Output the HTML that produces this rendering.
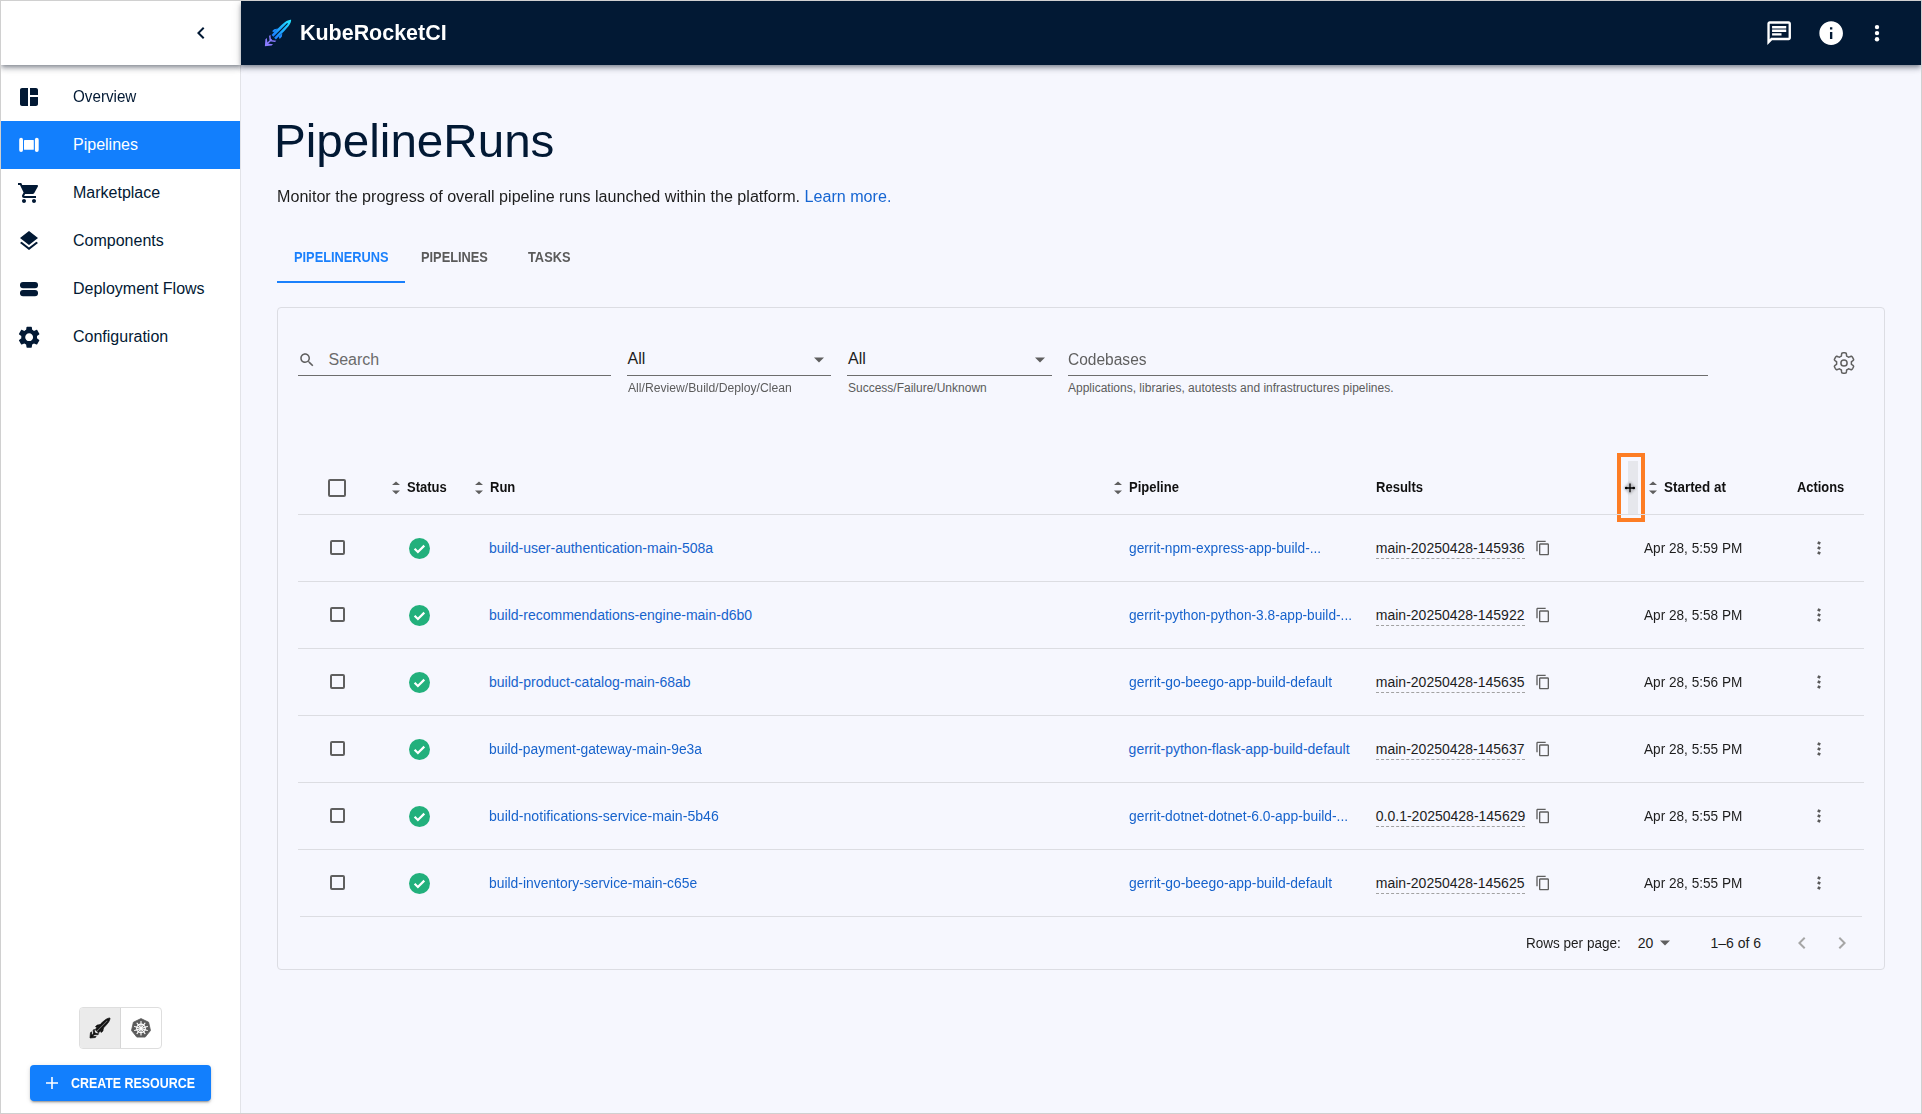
<!DOCTYPE html>
<html><head><meta charset="utf-8"><style>
*{box-sizing:border-box;margin:0;padding:0}
html,body{width:1922px;height:1114px;overflow:hidden}
body{font-family:"Liberation Sans",sans-serif;background:#f6f7fe;position:relative}
.t{position:absolute;white-space:nowrap}
.a{position:absolute}
svg{display:block}
</style></head><body>
<div class="a" style="left:1px;top:1px;width:240px;height:1112px;background:#fff;border-right:1px solid #e2e3e8"></div>
<div class="a" style="left:1px;top:121px;width:239px;height:48px;background:#127ffd"></div>
<div class="t" style="left:73px;top:89px;font-size:16px;line-height:16px;color:#021934;font-weight:400;transform:scaleX(0.95);transform-origin:0 0;">Overview</div>
<div class="t" style="left:73px;top:137px;font-size:16px;line-height:16px;color:#fff;font-weight:400;">Pipelines</div>
<div class="t" style="left:73px;top:185px;font-size:16px;line-height:16px;color:#021934;font-weight:400;">Marketplace</div>
<div class="t" style="left:73px;top:233px;font-size:16px;line-height:16px;color:#021934;font-weight:400;">Components</div>
<div class="t" style="left:73px;top:281px;font-size:16px;line-height:16px;color:#021934;font-weight:400;">Deployment Flows</div>
<div class="t" style="left:73px;top:329px;font-size:16px;line-height:16px;color:#021934;font-weight:400;">Configuration</div>
<svg class="a" style="left:17px;top:85px" width="24" height="24" viewBox="0 0 24 24"><g fill="#021934" ><path d="M11 21H5c-1.1 0-2-.9-2-2V5c0-1.1.9-2 2-2h6v18zm2 0h6c1.1 0 2-.9 2-2v-7h-8v9zm8-11V5c0-1.1-.9-2-2-2h-6v7h8z"/></g></svg>
<svg class="a" style="left:17px;top:133px" width="24" height="24" viewBox="0 0 24 24"><g fill="#fff" ><rect x="2.2" y="4.8" width="3.8" height="14.2" rx="1.9"/><rect x="7" y="7" width="9.8" height="9.8" rx=".6"/><rect x="17.9" y="4.8" width="3.8" height="14.2" rx="1.9"/></g></svg>
<svg class="a" style="left:17px;top:181px" width="24" height="24" viewBox="0 0 24 24"><g fill="#021934" ><path d="M7 18c-1.1 0-1.99.9-1.99 2S5.9 22 7 22s2-.9 2-2-.9-2-2-2zM1 2v2h2l3.6 7.59-1.35 2.45c-.16.28-.25.61-.25.96 0 1.1.9 2 2 2h12v-2H7.42c-.14 0-.25-.11-.25-.25l.03-.12.9-1.63h7.45c.75 0 1.41-.41 1.75-1.03l3.58-6.49c.08-.14.12-.31.12-.48 0-.55-.45-1-1-1H5.21l-.94-2H1zm16 16c-1.1 0-1.99.9-1.99 2s.89 2 1.99 2 2-.9 2-2-.9-2-2-2z"/></g></svg>
<svg class="a" style="left:17px;top:229px" width="24" height="24" viewBox="0 0 24 24"><g fill="#021934" ><path d="M11.99 18.54l-7.37-5.73L3 14.07l9 7 9-7-1.63-1.27-7.38 5.74zM12 16l7.36-5.73L21 9l-9-7-9 7 1.63 1.27L12 16z"/></g></svg>
<svg class="a" style="left:17px;top:277px" width="24" height="24" viewBox="0 0 24 24"><g fill="#021934" ><rect x="3" y="5" width="18" height="6.2" rx="3"/><rect x="3" y="13" width="18" height="6.2" rx="3"/></g></svg>
<svg class="a" style="left:15.85px;top:323.85px" width="26.3" height="26.3" viewBox="0 0 24 24"><g fill="#021934" ><path d="M19.14 12.94c.04-.3.06-.61.06-.94 0-.32-.02-.64-.07-.94l2.03-1.58c.18-.14.23-.41.12-.61l-1.92-3.32c-.12-.22-.37-.29-.59-.22l-2.39.96c-.5-.38-1.03-.7-1.62-.94l-.36-2.54c-.04-.24-.24-.41-.48-.41h-3.84c-.24 0-.43.17-.47.41l-.36 2.54c-.59.24-1.13.57-1.62.94l-2.39-.96c-.22-.08-.47 0-.59.22L2.74 8.87c-.12.21-.08.47.12.61l2.03 1.58c-.05.3-.09.63-.09.94s.02.64.07.94l-2.03 1.58c-.18.14-.23.41-.12.61l1.92 3.32c.12.22.37.29.59.22l2.39-.96c.5.38 1.03.7 1.62.94l.36 2.54c.05.24.24.41.48.41h3.84c.24 0 .44-.17.47-.41l.36-2.54c.59-.24 1.13-.56 1.62-.94l2.39.96c.22.08.47 0 .59-.22l1.92-3.32c.12-.22.07-.47-.12-.61l-2.01-1.58zM12 15.6c-1.98 0-3.6-1.62-3.6-3.6s1.62-3.6 3.6-3.6 3.6 1.62 3.6 3.6-1.62 3.6-3.6 3.6z"/></g></svg>
<div class="a" style="left:79px;top:1007px;width:83px;height:42px;border:1px solid #dedede;border-radius:4px;background:#fff;overflow:hidden"><div class="a" style="left:0;top:0;width:41px;height:40px;background:#ebebeb;border-right:1px solid #d6d6d6"></div></div>
<svg class="a" style="left:88px;top:1016px" width="24" height="24" viewBox="-15.8 -15.8 31.6 31.6"><g transform="rotate(45)" fill="#111" stroke="#111" stroke-width=".9" stroke-linejoin="round"><path d="M0 -18.6 C3 -15.5 3.4 -11 3.1 6 L0.55 6 L0.55 -13.5 L-0.55 -13.5 L-0.55 6 L-3.1 6 C-3.4 -11 -3 -15.5 0 -18.6Z"/><path d="M-3.2 -3 L-5.4 0 L-5.4 3 L-3.2 2.2Z M3.2 -3 L5.4 0 L5.4 3 L3.2 2.2Z"/><path d="M-4.2 6.6 L0 9.8 L4.2 6.6 L4.2 8.4 L0 11.8 L-4.2 8.4Z M-4.4 11.4 L0 14.8 L4.4 11.4 L4.4 13.4 L0 18.6 L-4.4 13.4Z M-0.7 9 h1.4 v7 h-1.4z"/></g></svg>
<svg class="a" style="left:130.5px;top:1017.5px" width="20" height="20" viewBox="0 0 20 20"><path d="M10 .6 L17.6 4.2 L19.5 12.5 L14.2 19.1 L5.8 19.1 L.5 12.5 L2.4 4.2Z" fill="#5b5b5b" stroke="#5b5b5b" stroke-width=".8" stroke-linejoin="round"/><circle cx="10" cy="10.4" r="4.3" fill="none" stroke="#fff" stroke-width="1.2"/><circle cx="10" cy="10.4" r="1.2" fill="#fff"/><g stroke="#fff" stroke-width="1.1" stroke-linecap="round"><line x1="10" y1="3.6" x2="10" y2="17"/><line x1="3.6" y1="8.4" x2="16.4" y2="12.4"/><line x1="16.4" y1="8.4" x2="3.6" y2="12.4"/><line x1="6" y1="15.6" x2="14" y2="5.2"/><line x1="14" y1="15.6" x2="6" y2="5.2"/></g></svg>
<div class="a" style="left:30px;top:1065px;width:181px;height:36px;background:#127ffd;border-radius:4px;box-shadow:0 3px 1px -2px rgba(0,0,0,.2),0 2px 2px 0 rgba(0,0,0,.14),0 1px 5px 0 rgba(0,0,0,.12)"></div>
<svg class="a" style="left:45px;top:1076px" width="14" height="14" viewBox="0 0 14 14"><path d="M6.2 1h1.6v12H6.2zM1 6.2h12v1.6H1z" fill="#fff"/></svg>
<div class="t" style="left:70.6px;top:1076px;font-size:14px;line-height:14px;color:#fff;font-weight:700;transform:scaleX(0.887);transform-origin:0 0;">CREATE RESOURCE</div>
<div class="a" style="left:1px;top:1px;width:240px;height:64px;background:#fff;box-shadow:0 2px 4px -1px rgba(10,20,40,.35),0 4px 5px 0 rgba(10,20,40,.2),0 1px 10px 0 rgba(0,0,0,.12);z-index:3"></div>
<div class="a" style="left:241px;top:1px;width:1680px;height:64px;background:#021934;box-shadow:0 2px 4px -1px rgba(10,20,40,.35),0 4px 5px 0 rgba(10,20,40,.2),0 1px 10px 0 rgba(0,0,0,.12);z-index:3"></div>
<svg class="a" style="left:188.7px;top:21px;z-index:4" width="24" height="24" viewBox="0 0 24 24"><path d="M15.41 7.41L14 6l-6 6 6 6 1.41-1.41L10.83 12z" fill="#021934"/></svg>
<svg class="a" style="left:262px;top:17px;z-index:4" width="32" height="32" viewBox="-16 -16 32 32">
<defs><linearGradient id="rg2" x1="0" y1="0" x2="0" y2="1"><stop offset="0" stop-color="#22e8ff"/><stop offset="1" stop-color="#1a7cff"/></linearGradient></defs>
<g transform="rotate(45)"><g fill="url(#rg2)"><path d="M0 -18.6 C3 -15.5 3.4 -11 3.1 6 L0.55 6 L0.55 -13.5 L-0.55 -13.5 L-0.55 6 L-3.1 6 C-3.4 -11 -3 -15.5 0 -18.6Z"/></g><g fill="#1f8cff"><path d="M-3.2 -3 L-5.4 0 L-5.4 3 L-3.2 2.2Z M3.2 -3 L5.4 0 L5.4 3 L3.2 2.2Z"/></g><g fill="#8a7cff"><path d="M-4.2 6.6 L0 9.8 L4.2 6.6 L4.2 8.4 L0 11.8 L-4.2 8.4Z M-4.4 11.4 L0 14.8 L4.4 11.4 L4.4 13.4 L0 18.6 L-4.4 13.4Z M-0.7 9 h1.4 v7 h-1.4z"/></g></g></svg>
<div class="t" style="left:299.5px;top:22px;font-size:22px;line-height:22px;color:#fff;font-weight:700;transform:scaleX(0.975);transform-origin:0 0;z-index:4;">KubeRocketCI</div>
<svg class="a" style="left:1764.6px;top:18.7px;z-index:4" width="28.3" height="28.3" viewBox="0 0 24 24"><path fill="#fff" d="M4 4h16v12H5.17L4 17.17V4m0-2c-1.1 0-1.99.9-1.99 2L2 22l4-4h14c1.1 0 2-.9 2-2V4c0-1.1-.9-2-2-2H4zm2 10h8v2H6v-2zm0-3h12v2H6V9zm0-3h12v2H6V6z"/></svg>
<svg class="a" style="left:1816.6px;top:18.7px;z-index:4" width="28.3" height="28.3" viewBox="0 0 24 24"><path fill="#fff" d="M12 2C6.48 2 2 6.48 2 12s4.48 10 10 10 10-4.48 10-10S17.52 2 12 2zm1 15h-2v-6h2v6zm0-8h-2V7h2v2z"/></svg>
<svg class="a" style="left:1867px;top:17px;z-index:4" width="20" height="32" viewBox="0 0 20 32"><g fill="#fff"><circle cx="10" cy="10.1" r="2.2"/><circle cx="10" cy="16.1" r="2.2"/><circle cx="10" cy="22.2" r="2.2"/></g></svg>
<div class="t" style="left:273.7px;top:117px;font-size:47px;line-height:47px;color:#021934;font-weight:400;transform:scaleX(1.0125);transform-origin:0 0;">PipelineRuns</div>
<div class="t" style="left:276.5px;top:189px;font-size:16px;line-height:16px;color:#1d1d1d;font-weight:400;transform:scaleX(1.007);transform-origin:0 0;">Monitor the progress of overall pipeline runs launched within the platform. <span style="color:#1565d2">Learn more.</span></div>
<div class="t" style="left:293.6px;top:250px;font-size:14px;line-height:14px;color:#1a80fc;font-weight:700;transform:scaleX(0.915);transform-origin:0 0;">PIPELINERUNS</div>
<div class="t" style="left:420.7px;top:250px;font-size:14px;line-height:14px;color:#5a5a5a;font-weight:700;transform:scaleX(0.915);transform-origin:0 0;">PIPELINES</div>
<div class="t" style="left:527.9px;top:250px;font-size:14px;line-height:14px;color:#5a5a5a;font-weight:700;transform:scaleX(0.915);transform-origin:0 0;">TASKS</div>
<div class="a" style="left:277px;top:281px;width:128px;height:2px;background:#1a80fc"></div>
<div class="a" style="left:277px;top:307px;width:1608px;height:663px;border:1px solid #dcdde3;border-radius:4px"></div>
<svg class="a" style="left:298px;top:351px" width="18" height="18" viewBox="0 0 24 24"><g fill="#5f5f5f" ><path d="M15.5 14h-.79l-.28-.27C15.41 12.59 16 11.11 16 9.5 16 5.91 13.09 3 9.5 3S3 5.91 3 9.5 5.91 16 9.5 16c1.61 0 3.09-.59 4.23-1.57l.27.28v.79l5 4.99L20.49 19l-4.99-5zm-6 0C7.01 14 5 11.99 5 9.5S7.01 5 9.5 5 14 7.01 14 9.5 11.99 14 9.5 14z"/></g></svg>
<div class="t" style="left:328.5px;top:352px;font-size:16px;line-height:16px;color:#6b6b6b;font-weight:400;">Search</div>
<div class="a" style="left:298px;top:375px;width:313px;height:1px;background:#6d6d6d"></div>
<div class="t" style="left:627.5px;top:351px;font-size:16px;line-height:16px;color:#1d1d1d;font-weight:400;">All</div>
<div class="a" style="left:627px;top:375px;width:204px;height:1px;background:#6d6d6d"></div>
<svg class="a" style="left:813px;top:357px" width="12" height="6" viewBox="0 0 12 6"><path d="M1 .5h10L6 5.5z" fill="#5f5f5f"/></svg>
<div class="t" style="left:627.5px;top:382px;font-size:12px;line-height:12px;color:#5c5c5c;font-weight:400;transform:scaleX(1.015);transform-origin:0 0;">All/Review/Build/Deploy/Clean</div>
<div class="t" style="left:848px;top:351px;font-size:16px;line-height:16px;color:#1d1d1d;font-weight:400;">All</div>
<div class="a" style="left:847px;top:375px;width:205px;height:1px;background:#6d6d6d"></div>
<svg class="a" style="left:1034px;top:357px" width="12" height="6" viewBox="0 0 12 6"><path d="M1 .5h10L6 5.5z" fill="#5f5f5f"/></svg>
<div class="t" style="left:848px;top:382px;font-size:12px;line-height:12px;color:#5c5c5c;font-weight:400;">Success/Failure/Unknown</div>
<div class="t" style="left:1067.5px;top:352px;font-size:16px;line-height:16px;color:#5f5f5f;font-weight:400;transform:scaleX(0.97);transform-origin:0 0;">Codebases</div>
<div class="a" style="left:1068px;top:375px;width:640px;height:1px;background:#6d6d6d"></div>
<div class="t" style="left:1068px;top:382px;font-size:12px;line-height:12px;color:#5c5c5c;font-weight:400;">Applications, libraries, autotests and infrastructures pipelines.</div>
<svg class="a" style="left:1832px;top:351px" width="24" height="24" viewBox="0 0 24 24"><path d="M19.40 12.00 L19.40 11.81 L19.39 11.61 L19.38 11.42 L19.36 11.23 L19.34 11.03 L19.37 10.83 L19.61 10.59 L20.00 10.30 L20.47 9.97 L20.93 9.61 L21.33 9.24 L21.58 8.89 L21.61 8.60 L21.52 8.34 L21.42 8.10 L21.32 7.85 L21.21 7.61 L21.09 7.37 L20.96 7.13 L20.83 6.90 L20.70 6.67 L20.55 6.44 L20.41 6.22 L20.25 6.00 L20.09 5.79 L19.93 5.58 L19.76 5.38 L19.48 5.26 L19.06 5.30 L18.54 5.46 L17.99 5.68 L17.47 5.92 L17.03 6.11 L16.69 6.20 L16.50 6.13 L16.35 6.01 L16.19 5.90 L16.03 5.79 L15.87 5.69 L15.70 5.59 L15.53 5.50 L15.36 5.41 L15.19 5.32 L15.01 5.24 L14.83 5.16 L14.67 5.04 L14.58 4.70 L14.53 4.22 L14.47 3.65 L14.39 3.07 L14.27 2.54 L14.09 2.15 L13.86 1.97 L13.60 1.93 L13.33 1.89 L13.07 1.86 L12.80 1.83 L12.53 1.81 L12.27 1.80 L12.00 1.80 L11.73 1.80 L11.47 1.81 L11.20 1.83 L10.93 1.86 L10.67 1.89 L10.40 1.93 L10.14 1.97 L9.91 2.15 L9.73 2.54 L9.61 3.07 L9.53 3.65 L9.47 4.22 L9.42 4.70 L9.33 5.04 L9.17 5.16 L8.99 5.24 L8.81 5.32 L8.64 5.41 L8.47 5.50 L8.30 5.59 L8.13 5.69 L7.97 5.79 L7.81 5.90 L7.65 6.01 L7.50 6.13 L7.31 6.20 L6.97 6.11 L6.53 5.92 L6.01 5.68 L5.46 5.46 L4.94 5.30 L4.52 5.26 L4.24 5.38 L4.07 5.58 L3.91 5.79 L3.75 6.00 L3.59 6.22 L3.45 6.44 L3.30 6.67 L3.17 6.90 L3.04 7.13 L2.91 7.37 L2.79 7.61 L2.68 7.85 L2.58 8.10 L2.48 8.34 L2.39 8.60 L2.42 8.89 L2.67 9.24 L3.07 9.61 L3.53 9.97 L4.00 10.30 L4.39 10.59 L4.63 10.83 L4.66 11.03 L4.64 11.23 L4.62 11.42 L4.61 11.61 L4.60 11.81 L4.60 12.00 L4.60 12.19 L4.61 12.39 L4.62 12.58 L4.64 12.77 L4.66 12.97 L4.63 13.17 L4.39 13.41 L4.00 13.70 L3.53 14.03 L3.07 14.39 L2.67 14.76 L2.42 15.11 L2.39 15.40 L2.48 15.66 L2.58 15.90 L2.68 16.15 L2.79 16.39 L2.91 16.63 L3.04 16.87 L3.17 17.10 L3.30 17.33 L3.45 17.56 L3.59 17.78 L3.75 18.00 L3.91 18.21 L4.07 18.42 L4.24 18.62 L4.52 18.74 L4.94 18.70 L5.46 18.54 L6.01 18.32 L6.53 18.08 L6.97 17.89 L7.31 17.80 L7.50 17.87 L7.65 17.99 L7.81 18.10 L7.97 18.21 L8.13 18.31 L8.30 18.41 L8.47 18.50 L8.64 18.59 L8.81 18.68 L8.99 18.76 L9.17 18.84 L9.33 18.96 L9.42 19.30 L9.47 19.78 L9.53 20.35 L9.61 20.93 L9.73 21.46 L9.91 21.85 L10.14 22.03 L10.40 22.07 L10.67 22.11 L10.93 22.14 L11.20 22.17 L11.47 22.19 L11.73 22.20 L12.00 22.20 L12.27 22.20 L12.53 22.19 L12.80 22.17 L13.07 22.14 L13.33 22.11 L13.60 22.07 L13.86 22.03 L14.09 21.85 L14.27 21.46 L14.39 20.93 L14.47 20.35 L14.53 19.78 L14.58 19.30 L14.67 18.96 L14.83 18.84 L15.01 18.76 L15.19 18.68 L15.36 18.59 L15.53 18.50 L15.70 18.41 L15.87 18.31 L16.03 18.21 L16.19 18.10 L16.35 17.99 L16.50 17.87 L16.69 17.80 L17.03 17.89 L17.47 18.08 L17.99 18.32 L18.54 18.54 L19.06 18.70 L19.48 18.74 L19.76 18.62 L19.93 18.42 L20.09 18.21 L20.25 18.00 L20.41 17.78 L20.55 17.56 L20.70 17.33 L20.83 17.10 L20.96 16.87 L21.09 16.63 L21.21 16.39 L21.32 16.15 L21.42 15.90 L21.52 15.66 L21.61 15.40 L21.58 15.11 L21.33 14.76 L20.93 14.39 L20.47 14.03 L20.00 13.70 L19.61 13.41 L19.37 13.17 L19.34 12.97 L19.36 12.77 L19.38 12.58 L19.39 12.39 L19.40 12.19Z" fill="none" stroke="#606060" stroke-width="1.5" stroke-linejoin="round"/><circle cx="12" cy="12" r="3.1" fill="none" stroke="#606060" stroke-width="1.5"/></svg>
<div class="a" style="left:328px;top:479px;width:18px;height:18px;border:2px solid #5f5f5f;border-radius:2px"></div>
<svg class="a" style="left:392px;top:481px" width="8" height="14" viewBox="0 0 8 14"><path d="M0 4L4 0.4L8 4z M0 9.6L8 9.6L4 13.2z" fill="#5f5f5f"/></svg>
<div class="t" style="left:407.3px;top:480px;font-size:14px;line-height:14px;color:#111;font-weight:700;transform:scaleX(0.93);transform-origin:0 0;">Status</div>
<svg class="a" style="left:474.8px;top:481px" width="8" height="14" viewBox="0 0 8 14"><path d="M0 4L4 0.4L8 4z M0 9.6L8 9.6L4 13.2z" fill="#5f5f5f"/></svg>
<div class="t" style="left:489.5px;top:480px;font-size:14px;line-height:14px;color:#111;font-weight:700;transform:scaleX(0.93);transform-origin:0 0;">Run</div>
<svg class="a" style="left:1114px;top:481px" width="8" height="14" viewBox="0 0 8 14"><path d="M0 4L4 0.4L8 4z M0 9.6L8 9.6L4 13.2z" fill="#5f5f5f"/></svg>
<div class="t" style="left:1128.6px;top:480px;font-size:14px;line-height:14px;color:#111;font-weight:700;transform:scaleX(0.93);transform-origin:0 0;">Pipeline</div>
<div class="t" style="left:1375.8px;top:480px;font-size:14px;line-height:14px;color:#111;font-weight:700;transform:scaleX(0.93);transform-origin:0 0;">Results</div>
<svg class="a" style="left:1648.7px;top:481px" width="8" height="14" viewBox="0 0 8 14"><path d="M0 4L4 0.4L8 4z M0 9.6L8 9.6L4 13.2z" fill="#5f5f5f"/></svg>
<div class="t" style="left:1663.5px;top:480px;font-size:14px;line-height:14px;color:#111;font-weight:700;transform:scaleX(0.96);transform-origin:0 0;">Started at</div>
<div class="t" style="left:1797px;top:480px;font-size:14px;line-height:14px;color:#111;font-weight:700;transform:scaleX(0.92);transform-origin:0 0;">Actions</div>
<div class="a" style="left:1628px;top:461px;width:10px;height:53px;background:#e6e7ec"></div>
<div class="a" style="left:1617px;top:453px;width:28px;height:69px;border:4px solid #fd7d24"></div>
<svg class="a" style="left:1620.5px;top:478.5px" width="18" height="18" viewBox="0 0 18 18"><path d="M9 2.5 L15.5 9 L9 15.5 L2.5 9Z" fill="#9a9a9f" opacity=".55" filter="url(#blr)"/><defs><filter id="blr"><feGaussianBlur stdDeviation=".8"/></filter></defs><path d="M9 4.6v8.6 M4.8 9h8.4" stroke="#000" stroke-width="1.3"/><circle cx="5.2" cy="9" r="1.3" fill="#000"/><circle cx="12.8" cy="9" r="1.3" fill="#000"/></svg>
<div class="a" style="left:298px;top:514px;width:1566px;height:1px;background:#dcdde2"></div>
<div class="a" style="left:329.5px;top:540px;width:15px;height:15px;border:2px solid #5f5f5f;border-radius:2px"></div>
<svg class="a" style="left:408.9px;top:537.9px" width="21" height="21" viewBox="0 0 21 21"><circle cx="10.5" cy="10.5" r="10.5" fill="#22b07c"/><path d="M5.6 10.8l3.3 3.2 6.4-6.4" fill="none" stroke="#fff" stroke-width="2.2"/></svg>
<div class="t" style="left:489px;top:541px;font-size:14px;line-height:14px;color:#1763cc;font-weight:400;">build-user-authentication-main-508a</div>
<div class="t" style="left:1128.6px;top:541px;font-size:14px;line-height:14px;color:#1763cc;font-weight:400;transform:scaleX(0.98);transform-origin:0 0;">gerrit-npm-express-app-build-...</div>
<div class="t" style="left:1375.8px;top:541px;font-size:14px;line-height:14px;color:#1d1d1d;font-weight:400;">main-20250428-145936</div>
<div class="a" style="left:1376px;top:557.5px;width:149px;height:0;border-top:1px dashed #a2a2a2"></div>
<svg class="a" style="left:1535px;top:540px" width="16" height="16" viewBox="0 0 24 24"><g fill="#5f5f5f" ><path d="M16 1H4c-1.1 0-2 .9-2 2v14h2V3h12V1zm3 4H8c-1.1 0-2 .9-2 2v14c0 1.1.9 2 2 2h11c1.1 0 2-.9 2-2V7c0-1.1-.9-2-2-2zm0 16H8V7h11v14z"/></g></svg>
<div class="t" style="left:1644px;top:541px;font-size:14px;line-height:14px;color:#1d1d1d;font-weight:400;transform:scaleX(0.972);transform-origin:0 0;">Apr 28, 5:59 PM</div>
<svg class="a" style="left:1809px;top:538px" width="20" height="20" viewBox="0 0 20 20"><g fill="#5a5a5a"><rect x="8.6" y="3.6" width="2.8" height="2.8" transform="rotate(20 10 5)"/><rect x="8.6" y="8.6" width="2.8" height="2.8" transform="rotate(20 10 10)"/><rect x="8.6" y="13.6" width="2.8" height="2.8" transform="rotate(20 10 15)"/></g></svg>
<div class="a" style="left:298px;top:581px;width:1566px;height:1px;background:#dcdde2"></div>
<div class="a" style="left:329.5px;top:607px;width:15px;height:15px;border:2px solid #5f5f5f;border-radius:2px"></div>
<svg class="a" style="left:408.9px;top:604.9px" width="21" height="21" viewBox="0 0 21 21"><circle cx="10.5" cy="10.5" r="10.5" fill="#22b07c"/><path d="M5.6 10.8l3.3 3.2 6.4-6.4" fill="none" stroke="#fff" stroke-width="2.2"/></svg>
<div class="t" style="left:489px;top:608px;font-size:14px;line-height:14px;color:#1763cc;font-weight:400;">build-recommendations-engine-main-d6b0</div>
<div class="t" style="left:1128.6px;top:608px;font-size:14px;line-height:14px;color:#1763cc;font-weight:400;transform:scaleX(0.978);transform-origin:0 0;">gerrit-python-python-3.8-app-build-...</div>
<div class="t" style="left:1375.8px;top:608px;font-size:14px;line-height:14px;color:#1d1d1d;font-weight:400;">main-20250428-145922</div>
<div class="a" style="left:1376px;top:624.5px;width:149px;height:0;border-top:1px dashed #a2a2a2"></div>
<svg class="a" style="left:1535px;top:607px" width="16" height="16" viewBox="0 0 24 24"><g fill="#5f5f5f" ><path d="M16 1H4c-1.1 0-2 .9-2 2v14h2V3h12V1zm3 4H8c-1.1 0-2 .9-2 2v14c0 1.1.9 2 2 2h11c1.1 0 2-.9 2-2V7c0-1.1-.9-2-2-2zm0 16H8V7h11v14z"/></g></svg>
<div class="t" style="left:1644px;top:608px;font-size:14px;line-height:14px;color:#1d1d1d;font-weight:400;transform:scaleX(0.972);transform-origin:0 0;">Apr 28, 5:58 PM</div>
<svg class="a" style="left:1809px;top:605px" width="20" height="20" viewBox="0 0 20 20"><g fill="#5a5a5a"><rect x="8.6" y="3.6" width="2.8" height="2.8" transform="rotate(20 10 5)"/><rect x="8.6" y="8.6" width="2.8" height="2.8" transform="rotate(20 10 10)"/><rect x="8.6" y="13.6" width="2.8" height="2.8" transform="rotate(20 10 15)"/></g></svg>
<div class="a" style="left:298px;top:648px;width:1566px;height:1px;background:#dcdde2"></div>
<div class="a" style="left:329.5px;top:674px;width:15px;height:15px;border:2px solid #5f5f5f;border-radius:2px"></div>
<svg class="a" style="left:408.9px;top:671.9px" width="21" height="21" viewBox="0 0 21 21"><circle cx="10.5" cy="10.5" r="10.5" fill="#22b07c"/><path d="M5.6 10.8l3.3 3.2 6.4-6.4" fill="none" stroke="#fff" stroke-width="2.2"/></svg>
<div class="t" style="left:489px;top:675px;font-size:14px;line-height:14px;color:#1763cc;font-weight:400;">build-product-catalog-main-68ab</div>
<div class="t" style="left:1128.6px;top:675px;font-size:14px;line-height:14px;color:#1763cc;font-weight:400;transform:scaleX(0.992);transform-origin:0 0;">gerrit-go-beego-app-build-default</div>
<div class="t" style="left:1375.8px;top:675px;font-size:14px;line-height:14px;color:#1d1d1d;font-weight:400;">main-20250428-145635</div>
<div class="a" style="left:1376px;top:691.5px;width:149px;height:0;border-top:1px dashed #a2a2a2"></div>
<svg class="a" style="left:1535px;top:674px" width="16" height="16" viewBox="0 0 24 24"><g fill="#5f5f5f" ><path d="M16 1H4c-1.1 0-2 .9-2 2v14h2V3h12V1zm3 4H8c-1.1 0-2 .9-2 2v14c0 1.1.9 2 2 2h11c1.1 0 2-.9 2-2V7c0-1.1-.9-2-2-2zm0 16H8V7h11v14z"/></g></svg>
<div class="t" style="left:1644px;top:675px;font-size:14px;line-height:14px;color:#1d1d1d;font-weight:400;transform:scaleX(0.972);transform-origin:0 0;">Apr 28, 5:56 PM</div>
<svg class="a" style="left:1809px;top:672px" width="20" height="20" viewBox="0 0 20 20"><g fill="#5a5a5a"><rect x="8.6" y="3.6" width="2.8" height="2.8" transform="rotate(20 10 5)"/><rect x="8.6" y="8.6" width="2.8" height="2.8" transform="rotate(20 10 10)"/><rect x="8.6" y="13.6" width="2.8" height="2.8" transform="rotate(20 10 15)"/></g></svg>
<div class="a" style="left:298px;top:715px;width:1566px;height:1px;background:#dcdde2"></div>
<div class="a" style="left:329.5px;top:741px;width:15px;height:15px;border:2px solid #5f5f5f;border-radius:2px"></div>
<svg class="a" style="left:408.9px;top:738.9px" width="21" height="21" viewBox="0 0 21 21"><circle cx="10.5" cy="10.5" r="10.5" fill="#22b07c"/><path d="M5.6 10.8l3.3 3.2 6.4-6.4" fill="none" stroke="#fff" stroke-width="2.2"/></svg>
<div class="t" style="left:489px;top:742px;font-size:14px;line-height:14px;color:#1763cc;font-weight:400;transform:scaleX(0.988);transform-origin:0 0;">build-payment-gateway-main-9e3a</div>
<div class="t" style="left:1128.6px;top:742px;font-size:14px;line-height:14px;color:#1763cc;font-weight:400;">gerrit-python-flask-app-build-default</div>
<div class="t" style="left:1375.8px;top:742px;font-size:14px;line-height:14px;color:#1d1d1d;font-weight:400;">main-20250428-145637</div>
<div class="a" style="left:1376px;top:758.5px;width:149px;height:0;border-top:1px dashed #a2a2a2"></div>
<svg class="a" style="left:1535px;top:741px" width="16" height="16" viewBox="0 0 24 24"><g fill="#5f5f5f" ><path d="M16 1H4c-1.1 0-2 .9-2 2v14h2V3h12V1zm3 4H8c-1.1 0-2 .9-2 2v14c0 1.1.9 2 2 2h11c1.1 0 2-.9 2-2V7c0-1.1-.9-2-2-2zm0 16H8V7h11v14z"/></g></svg>
<div class="t" style="left:1644px;top:742px;font-size:14px;line-height:14px;color:#1d1d1d;font-weight:400;transform:scaleX(0.972);transform-origin:0 0;">Apr 28, 5:55 PM</div>
<svg class="a" style="left:1809px;top:739px" width="20" height="20" viewBox="0 0 20 20"><g fill="#5a5a5a"><rect x="8.6" y="3.6" width="2.8" height="2.8" transform="rotate(20 10 5)"/><rect x="8.6" y="8.6" width="2.8" height="2.8" transform="rotate(20 10 10)"/><rect x="8.6" y="13.6" width="2.8" height="2.8" transform="rotate(20 10 15)"/></g></svg>
<div class="a" style="left:298px;top:782px;width:1566px;height:1px;background:#dcdde2"></div>
<div class="a" style="left:329.5px;top:808px;width:15px;height:15px;border:2px solid #5f5f5f;border-radius:2px"></div>
<svg class="a" style="left:408.9px;top:805.9px" width="21" height="21" viewBox="0 0 21 21"><circle cx="10.5" cy="10.5" r="10.5" fill="#22b07c"/><path d="M5.6 10.8l3.3 3.2 6.4-6.4" fill="none" stroke="#fff" stroke-width="2.2"/></svg>
<div class="t" style="left:489px;top:809px;font-size:14px;line-height:14px;color:#1763cc;font-weight:400;transform:scaleX(1.008);transform-origin:0 0;">build-notifications-service-main-5b46</div>
<div class="t" style="left:1128.6px;top:809px;font-size:14px;line-height:14px;color:#1763cc;font-weight:400;transform:scaleX(0.988);transform-origin:0 0;">gerrit-dotnet-dotnet-6.0-app-build-...</div>
<div class="t" style="left:1375.8px;top:809px;font-size:14px;line-height:14px;color:#1d1d1d;font-weight:400;">0.0.1-20250428-145629</div>
<div class="a" style="left:1376px;top:825.5px;width:149px;height:0;border-top:1px dashed #a2a2a2"></div>
<svg class="a" style="left:1535px;top:808px" width="16" height="16" viewBox="0 0 24 24"><g fill="#5f5f5f" ><path d="M16 1H4c-1.1 0-2 .9-2 2v14h2V3h12V1zm3 4H8c-1.1 0-2 .9-2 2v14c0 1.1.9 2 2 2h11c1.1 0 2-.9 2-2V7c0-1.1-.9-2-2-2zm0 16H8V7h11v14z"/></g></svg>
<div class="t" style="left:1644px;top:809px;font-size:14px;line-height:14px;color:#1d1d1d;font-weight:400;transform:scaleX(0.972);transform-origin:0 0;">Apr 28, 5:55 PM</div>
<svg class="a" style="left:1809px;top:806px" width="20" height="20" viewBox="0 0 20 20"><g fill="#5a5a5a"><rect x="8.6" y="3.6" width="2.8" height="2.8" transform="rotate(20 10 5)"/><rect x="8.6" y="8.6" width="2.8" height="2.8" transform="rotate(20 10 10)"/><rect x="8.6" y="13.6" width="2.8" height="2.8" transform="rotate(20 10 15)"/></g></svg>
<div class="a" style="left:298px;top:849px;width:1566px;height:1px;background:#dcdde2"></div>
<div class="a" style="left:329.5px;top:875px;width:15px;height:15px;border:2px solid #5f5f5f;border-radius:2px"></div>
<svg class="a" style="left:408.9px;top:872.9px" width="21" height="21" viewBox="0 0 21 21"><circle cx="10.5" cy="10.5" r="10.5" fill="#22b07c"/><path d="M5.6 10.8l3.3 3.2 6.4-6.4" fill="none" stroke="#fff" stroke-width="2.2"/></svg>
<div class="t" style="left:489px;top:876px;font-size:14px;line-height:14px;color:#1763cc;font-weight:400;transform:scaleX(0.991);transform-origin:0 0;">build-inventory-service-main-c65e</div>
<div class="t" style="left:1128.6px;top:876px;font-size:14px;line-height:14px;color:#1763cc;font-weight:400;transform:scaleX(0.992);transform-origin:0 0;">gerrit-go-beego-app-build-default</div>
<div class="t" style="left:1375.8px;top:876px;font-size:14px;line-height:14px;color:#1d1d1d;font-weight:400;">main-20250428-145625</div>
<div class="a" style="left:1376px;top:892.5px;width:149px;height:0;border-top:1px dashed #a2a2a2"></div>
<svg class="a" style="left:1535px;top:875px" width="16" height="16" viewBox="0 0 24 24"><g fill="#5f5f5f" ><path d="M16 1H4c-1.1 0-2 .9-2 2v14h2V3h12V1zm3 4H8c-1.1 0-2 .9-2 2v14c0 1.1.9 2 2 2h11c1.1 0 2-.9 2-2V7c0-1.1-.9-2-2-2zm0 16H8V7h11v14z"/></g></svg>
<div class="t" style="left:1644px;top:876px;font-size:14px;line-height:14px;color:#1d1d1d;font-weight:400;transform:scaleX(0.972);transform-origin:0 0;">Apr 28, 5:55 PM</div>
<svg class="a" style="left:1809px;top:873px" width="20" height="20" viewBox="0 0 20 20"><g fill="#5a5a5a"><rect x="8.6" y="3.6" width="2.8" height="2.8" transform="rotate(20 10 5)"/><rect x="8.6" y="8.6" width="2.8" height="2.8" transform="rotate(20 10 10)"/><rect x="8.6" y="13.6" width="2.8" height="2.8" transform="rotate(20 10 15)"/></g></svg>
<div class="a" style="left:300px;top:916px;width:1562px;height:1px;background:#dcdde2"></div>
<div class="t" style="left:1526.3px;top:936px;font-size:14px;line-height:14px;color:#1d1d1d;font-weight:400;transform:scaleX(0.966);transform-origin:0 0;">Rows per page:</div>
<div class="t" style="left:1637.8px;top:936px;font-size:14px;line-height:14px;color:#1d1d1d;font-weight:400;">20</div>
<svg class="a" style="left:1659px;top:940px" width="12" height="6" viewBox="0 0 12 6"><path d="M1 .5h10L6 5.5z" fill="#5f5f5f"/></svg>
<div class="t" style="left:1710.5px;top:936px;font-size:14px;line-height:14px;color:#1d1d1d;font-weight:400;">1&#8211;6 of 6</div>
<svg class="a" style="left:1790px;top:931px" width="24" height="24" viewBox="0 0 24 24"><path d="M15.41 7.41L14 6l-6 6 6 6 1.41-1.41L10.83 12z" fill="#a6a6a6"/></svg>
<svg class="a" style="left:1830px;top:931px" width="24" height="24" viewBox="0 0 24 24"><path d="M10 6L8.59 7.41 13.17 12l-4.58 4.59L10 18l6-6z" fill="#a6a6a6"/></svg>
<div class="a" style="left:0;top:0;width:1922px;height:1114px;border:1px solid #d0d0d0;z-index:10"></div>
</body></html>
